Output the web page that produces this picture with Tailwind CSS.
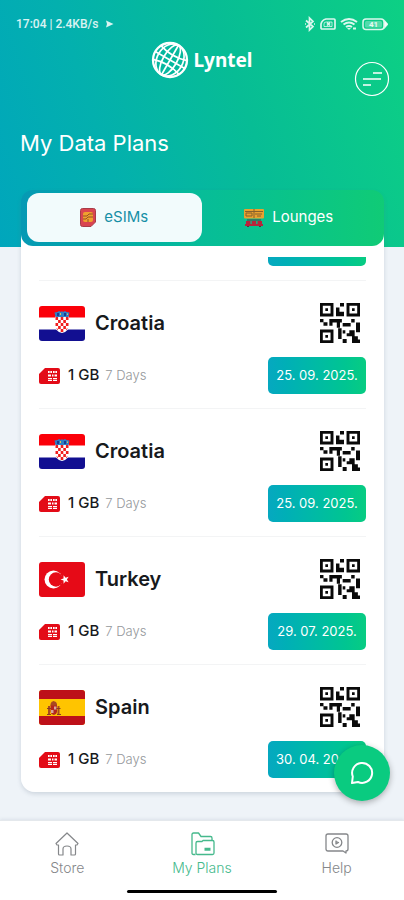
<!DOCTYPE html>
<html lang="en">
<head>
<meta charset="utf-8">
<meta name="viewport" content="width=device-width, initial-scale=1">
<title>Lyntel – My Data Plans</title>
<script src="https://cdn.jsdelivr.net/npm/@tailwindcss/browser@4"></script>
</head>
<body class="bg-[#eef3f8] font-['Inter',sans-serif] text-[#17191c]">

<svg class="hidden" aria-hidden="true">
  <!-- QR badge on a 15 x 15 module grid -->
  <symbol id="qr" viewBox="0 0 15 15">
    <g fill="none" stroke="#0a0a0a" stroke-width="1.1">
      <path d="M.5.5h4v4h-4zM10.500.5h4v4h-4zM.5 10.500h4v4h-4z"/>
    </g>
    <path fill="#0a0a0a" d="M2 2h1v1H2zM12 2h1v1h-1zM2 12h1v1H2zM7.500 0h1.500v1.300H7.500zM6 1.700h1.300v1.600H9V5H6zM0 6h1.300v1.200H0zM1.300 7.200h1.500v1.300H1.300zM3.500 6h4.700v1.300h-.7v2H6.300v-2H4.700v1.200H3.500V7.300zM8.500 7.500h3v1.300h-3zM11.700 6H13v1.300h-1.300zM13.500 7.300H15V11h-1.500zM6.800 9.500h1.300v4H6.800zM10 10.200h3v2.300h1.200v1.200H15V15h-3v-2.500h-2v-1.200h1v-1.100zM8.500 13.500H10V15H8.500zM8.500 10.200h1v1.200h-1z"/>
  </symbol>
  <symbol id="sim" viewBox="0 0 21 16">
    <path fill="#e30b17" d="M6 0h13a2 2 0 0 1 2 2v12a2 2 0 0 1-2 2H2a2 2 0 0 1-2-2V6z"/>
    <path fill="#fff" d="M9 3h4v2H9zM14 3h4v2h-4zM9 6.500h3v2H9zM13 6.500h1.500v2H13zM15.500 6.500H18v2h-2.500zM9 10h4v3H9zM14 10h4v3h-4z"/>
    <path stroke="#e30b17" stroke-width=".7" d="M9 11.500h9M11 2v3M16 2v3"/>
  </symbol>
  <symbol id="croatia" viewBox="0 0 46 35">
    <path fill="#fff" d="M0 0h46v35H0z"/><path fill="#fb0009" d="M0 0h46v11.500H0z"/><path fill="#120f91" d="M0 23.500h46V35H0z"/>
    <path fill="#fff" d="M16 10.500h14v9q0 6-7 7.500-7-1.500-7-7.500z"/>
    <path fill="#f01e1e" d="M16.500 11h2.600v3h-2.600zM21.700 11h2.600v3h-2.600zM26.900 11h2.600v3h-2.600zM19.100 14h2.600v3h-2.600zM24.300 14h2.600v3h-2.600zM16.500 17h2.600v3h-2.600zM21.700 17h2.600v3h-2.600zM26.900 17h2.600v3h-2.600zM19.100 20h2.600v3h-2.600zM24.300 20h2.600v3h-2.600zM21.700 23h2.600v3h-2.600zM17 22l2 1v1.500zM29 22l-2 1v1.500z"/>
    <path fill="#2d7fc4" d="M15.500 6.500l3-.5 1.500-1 2 1 1-1 1 1 2-1 1.500 1 3 .5-1 4.500h-13z"/>
    <path fill="#1b3d92" d="M18 7h2v3h-2zM25 7h2v3h-2z"/><path fill="#d9c65a" d="M21 7h1v2h-1zM28 7.500h1V9h-1z"/>
  </symbol>
  <symbol id="turkey" viewBox="0 0 46 35">
    <path fill="#e60a17" d="M0 0h46v35H0z"/><circle cx="14.500" cy="17.500" r="9" fill="#fff"/><circle cx="17" cy="17.500" r="7.200" fill="#e60a17"/>
    <path fill="#fff" d="M21.500 17.500l3-1.100.1-3.200 2 2.500 3-1-1.700 2.800 1.700 2.700-3-.9-2 2.500-.1-3.200z"/>
  </symbol>
  <symbol id="spain" viewBox="0 0 46 35">
    <path fill="#ffc400" d="M0 0h46v35H0z"/><path fill="#bd1019" d="M0 0h46v9H0zM0 26h46v9H0z"/>
    <path fill="#a84a20" d="M9 16h2v8H9zM18.500 16h2v8h-2zM11.500 14l1-2 2-1 2.500 1 1 2v2h-6.500z"/>
    <path fill="#b3261e" d="M11.500 15.500h6.500V22q-.5 2.500-3.200 3-2.800-.5-3.300-3z"/>
    <path fill="#d9a79b" d="M15 16.500h2.500v3H15zM12 20h2.500v3H12z"/><path fill="#8b3a22" d="M8 18h4v1H8zM17.500 18h4v1h-4zM8 24h4v1H8zM18 24h4v1h-4z"/>
  </symbol>
</svg>

<div class="flex h-dvh flex-col">
  <header class="shrink-0 bg-linear-[72deg,#00a6bc_0%,#03b0ae_28%,#07bd95_60%,#0dd084_100%] px-5 pt-4 text-white">
    <div class="flex h-4 items-center justify-between font-['Roboto',sans-serif] text-xs font-medium text-white/85">
      <p class="-ml-1 flex items-center gap-2">17:04 | 2.4KB/s
        <svg class="size-2" viewBox="0 0 8 8" fill="currentColor"><path d="M0 .5L7.500 4 0 7.500l1-3.500z"/></svg>
      </p>
      <div class="-mr-1 flex items-center gap-1">
        <svg class="h-4 w-3" viewBox="0 0 12 16" fill="none" stroke="currentColor" stroke-width="1.700"><path d="M2 4.500l7 6-3.500 3.500V2L9 5.500l-7 6M1 8h1M10 8h1"/></svg>
        <svg class="h-4 w-4" viewBox="0 0 16 16" fill="none" stroke="currentColor" stroke-width="1.700"><path d="M6 3h8q1 0 1 1v8q0 1-1 1H2q-1 0-1-1V8q1-4 5-5z"/><path d="M4 10.500V8q0-2 2-2h6v4.500z" stroke-width=".8"/><path d="M7 6.500l3 3m0-3l-3 3"/></svg>
        <svg class="h-4 w-[18px]" viewBox="0 0 18 16" fill="none" stroke="currentColor" stroke-width="2"><path d="M1 6q8-6 16 0M3.500 8.500q5.500-4 11 0M6 11q3-2 6 0"/><path d="M7 12l2 2 2-2zM13 11.500h3v2h-3z" fill="currentColor" stroke="none"/></svg>
        <svg class="h-4 w-[26px]" viewBox="0 0 26 16" fill="none" stroke="currentColor" stroke-width="1.500"><rect x="1" y="3" width="21" height="10.500" rx="3"/><path d="M23 5.500l2.500 2.700L23 11z" fill="currentColor"/><rect x="3" y="5" width="17" height="6.500" rx="1.500" fill="currentColor" fill-opacity=".35" stroke="none"/><text x="11.500" y="11" text-anchor="middle" font-size="8" font-weight="700" fill="currentColor" stroke="none">41</text></svg>
      </div>
    </div>
    <div class="grid grid-cols-[1fr_auto_1fr] pt-2">
      <a href="#" class="col-start-2 mt-0.5 flex h-9 items-center gap-1 font-['Noto_Sans',sans-serif] text-[19px] font-bold">
        <svg class="size-[38px]" viewBox="0 0 38 38" fill="none" stroke="#fff" stroke-width="1.700"><circle cx="19" cy="19" r="17" stroke-width="2.300"/><g transform="rotate(30 19 19)"><ellipse cx="19" cy="19" rx="7" ry="17"/><ellipse cx="19" cy="19" rx="13" ry="17"/><path d="M19 2v34M2 19h34M4 11q15 5 30 0M4 27q15-5 30 0"/></g></svg>
        Lyntel
      </a>
      <button type="button" aria-label="Menu" class="mt-[21px] -mr-1.5 size-9 justify-self-end">
        <svg class="size-9" viewBox="0 0 36 36" fill="none" stroke="#fff" stroke-width="1.200"><circle cx="18" cy="18" r="16.500"/><path d="M19 12h9M9 18h18M9 24h8" stroke-width="1.500"/></svg>
      </button>
    </div>
    <h1 class="pt-8 text-[22px] leading-7">My Data Plans</h1>
    <div class="h-[90px]"></div>
  </header>

  <main class="z-10 mr-5 ml-[21px] -mt-[57px] mb-7 flex min-h-0 flex-1 flex-col rounded-[14px] bg-linear-to-b from-transparent from-[44px] to-white to-[44px] shadow-[0_2px_4px_rgb(90_110_130/0.22)]">
    <div role="tablist" class="flex h-14 shrink-0 rounded-xl bg-linear-to-r from-[#0699b4] via-[#07bd98] to-[#10cb76] pt-[3px] pr-2 pb-1 pl-1.5 text-[15px]">
      <button role="tab" aria-selected="true" type="button" class="flex flex-1 items-center justify-center gap-2 rounded-xl bg-[#f2fbfc] text-[#168fa6]">
        <svg class="h-[19px] w-4" viewBox="0 0 16 19"><path fill="#d94450" stroke="#a83c48" d="M2.500.5h11q2 0 2 2V14L11 18.500H2.500q-2 0-2-2v-14q0-2 2-2z"/><rect x="3" y="4" width="10" height="10" rx="2" fill="#f0a02e"/><path fill="none" stroke="#945326" d="M3 8h4l2-2h4M3 11h3l2-2h5M8 11v3"/></svg>
        eSIMs
      </button>
      <button role="tab" aria-selected="false" type="button" class="flex flex-1 items-center justify-center gap-2 text-white">
        <svg class="h-[18px] w-5" viewBox="0 0 20 18"><rect width="20" height="9.500" rx="1" fill="#e9a12f"/><path fill="none" stroke="#86602d" d="M1 2.500h18M2 4h6v3H2zM11 5h7M13 7h4M10 0v9"/><path fill="#b8233b" d="M2 12h4.500v3H2zM7.700 12h4.500v3H7.700zM13.500 12H18v3h-4.500zM1 15h18v2H1z"/><path stroke="#55323c" d="M3 11h14M3 17.500h2M15 17.500h2"/></svg>
        Lounges
      </button>
    </div>

    <div class="mt-[11px] flex min-h-0 flex-1 flex-col justify-end overflow-hidden rounded-b-[14px] px-[18px]">
      <div class="flex min-h-6 flex-1 items-start justify-end"><div class="h-2.5 w-[98px] rounded-b-[5px] bg-linear-to-r from-[#06a8c0] to-[#08cc82]"></div></div>

      <article class="h-32 shrink-0 border-t border-[#f3f4f5] pt-[22px]">
        <div class="flex h-10 items-center">
          <svg class="h-[35px] w-[46px] rounded-[3px]"><use href="#croatia"/></svg>
          <h2 class="ml-2.5 flex-1 text-xl leading-6 font-semibold">Croatia</h2>
          <button type="button" aria-label="Show QR code" class="mr-1.5"><svg class="size-10"><use href="#qr"/></svg></button>
        </div>
        <div class="mt-3.5 flex h-[37px] items-center">
          <svg class="h-4 w-[21px]"><use href="#sim"/></svg>
          <p class="ml-2 flex flex-1 items-baseline gap-1.5 text-[15px] font-medium">1 GB <span class="text-[13px] font-light text-[#94979b]">7 Days</span></p>
          <time class="flex h-full w-[98px] items-center justify-center rounded-[5px] bg-linear-to-r from-[#06a8c0] to-[#08cc82] text-[13px] whitespace-nowrap text-white">25. 09. 2025.</time>
        </div>
      </article>

      <article class="h-32 shrink-0 border-t border-[#f3f4f5] pt-[22px]">
        <div class="flex h-10 items-center">
          <svg class="h-[35px] w-[46px] rounded-[3px]"><use href="#croatia"/></svg>
          <h2 class="ml-2.5 flex-1 text-xl leading-6 font-semibold">Croatia</h2>
          <button type="button" aria-label="Show QR code" class="mr-1.5"><svg class="size-10"><use href="#qr"/></svg></button>
        </div>
        <div class="mt-3.5 flex h-[37px] items-center">
          <svg class="h-4 w-[21px]"><use href="#sim"/></svg>
          <p class="ml-2 flex flex-1 items-baseline gap-1.5 text-[15px] font-medium">1 GB <span class="text-[13px] font-light text-[#94979b]">7 Days</span></p>
          <time class="flex h-full w-[98px] items-center justify-center rounded-[5px] bg-linear-to-r from-[#06a8c0] to-[#08cc82] text-[13px] whitespace-nowrap text-white">25. 09. 2025.</time>
        </div>
      </article>

      <article class="h-32 shrink-0 border-t border-[#f3f4f5] pt-[22px]">
        <div class="flex h-10 items-center">
          <svg class="h-[35px] w-[46px] rounded-[3px]"><use href="#turkey"/></svg>
          <h2 class="ml-2.5 flex-1 text-xl leading-6 font-semibold">Turkey</h2>
          <button type="button" aria-label="Show QR code" class="mr-1.5"><svg class="size-10"><use href="#qr"/></svg></button>
        </div>
        <div class="mt-3.5 flex h-[37px] items-center">
          <svg class="h-4 w-[21px]"><use href="#sim"/></svg>
          <p class="ml-2 flex flex-1 items-baseline gap-1.5 text-[15px] font-medium">1 GB <span class="text-[13px] font-light text-[#94979b]">7 Days</span></p>
          <time class="flex h-full w-[98px] items-center justify-center rounded-[5px] bg-linear-to-r from-[#06a8c0] to-[#08cc82] text-[13px] whitespace-nowrap text-white">29. 07. 2025.</time>
        </div>
      </article>

      <article class="h-32 shrink-0 border-t border-[#f3f4f5] pt-[22px]">
        <div class="flex h-10 items-center">
          <svg class="h-[35px] w-[46px] rounded-[3px]"><use href="#spain"/></svg>
          <h2 class="ml-2.5 flex-1 text-xl leading-6 font-semibold">Spain</h2>
          <button type="button" aria-label="Show QR code" class="mr-1.5"><svg class="size-10"><use href="#qr"/></svg></button>
        </div>
        <div class="mt-3.5 flex h-[37px] items-center">
          <svg class="h-4 w-[21px]"><use href="#sim"/></svg>
          <p class="ml-2 flex flex-1 items-baseline gap-1.5 text-[15px] font-medium">1 GB <span class="text-[13px] font-light text-[#94979b]">7 Days</span></p>
          <time class="flex h-full w-[98px] items-center rounded-[5px] bg-linear-to-r from-[#06a8c0] to-[#08cc82] pl-2 text-[13px] whitespace-nowrap text-white">30. 04. 20</time>
        </div>
      </article>
    </div>
  </main>

  <nav class="shrink-0 border-t border-[#e4e8ec] bg-white shadow-[0_-1px_3px_rgb(90_110_130/0.12)]">
    <div class="grid h-[69px] grid-cols-3 text-sm leading-5 font-light text-[#85878a]">
      <a href="#" class="flex flex-col items-center gap-px pt-2.5">
        <svg class="size-[26px]" viewBox="0 0 26 26" fill="none" stroke="currentColor" stroke-width="1.200" stroke-linejoin="round"><path d="M13 2L2 12.500l1 1.500h1.500v9q0 1 1 1H9v-6q0-3 4-3t4 3v6h3.500q1 0 1-1v-9H23l1-1.500z"/></svg>
        Store
      </a>
      <a href="#" aria-current="page" class="flex flex-col items-center gap-px pt-2.5 text-[#45b98c]">
        <svg class="size-[26px]" viewBox="0 0 26 26" fill="none" stroke="currentColor" stroke-width="1.300" stroke-linejoin="round"><path d="M6.500 23.500h-2Q3 23.500 3 22V3.500Q3 2 4.500 2h5l2.500 3.500h9.500Q23 5.500 23 7v3"/><path d="M7 22V12q0-1.500 1.500-1.500H13l1-1h9.500Q25 9.500 25 11v11q0 1.500-1.500 1.500h-15Q7 23.500 7 22z"/><path d="M15.500 17.500h6M15.500 19h6"/></svg>
        My Plans
      </a>
      <a href="#" class="flex flex-col items-center gap-px pt-2.5">
        <svg class="size-[26px]" viewBox="0 0 26 26" fill="none" stroke="currentColor" stroke-width="1.300" stroke-linejoin="round"><path d="M4 3h18q2 0 2 2v13q0 2-2 2v2l-3-2H4q-2 0-2-2V5q0-2 2-2z"/><circle cx="13" cy="11.500" r="4.800"/><path d="M12 9.500v4M12 10.500l2.500 1-2.500 1.500"/></svg>
        Help
      </a>
    </div>
    <div class="mx-auto mb-[7px] h-[3px] w-[150px] rounded-full bg-black"></div>
  </nav>
</div>

<button type="button" aria-label="Open chat" class="fixed right-3.5 bottom-[99px] z-20 flex size-14 items-center justify-center rounded-full bg-[#0acb80] shadow-[0_2px_6px_rgb(0_0_0/0.3)]">
  <svg class="size-6" viewBox="0 0 24 24" fill="none" stroke="#fff" stroke-width="2" stroke-linejoin="round"><path d="M2 22l.8-6.500A10 10 0 1 1 8 21z"/></svg>
</button>
</body>
</html>
